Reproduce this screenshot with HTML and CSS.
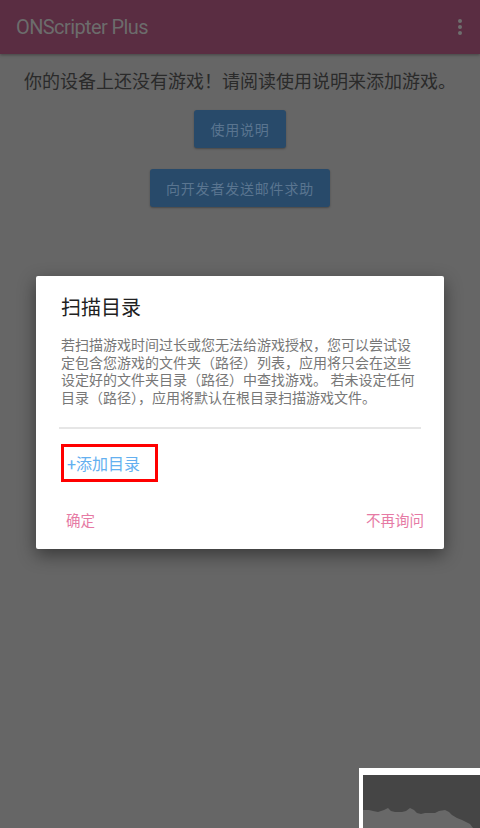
FILE: index.html
```html
<!DOCTYPE html>
<html lang="zh-CN">
<head>
<meta charset="utf-8">
<title>ONScripter Plus</title>
<link rel="stylesheet" href="styles.css">
</head>
<body>
<header class="appbar">
  <span class="appbar-title">ONScripter Plus</span>
  <span class="kebab"><i></i><i></i><i></i></span>
</header>
<main class="content">
  <p class="empty-msg">你的设备上还没有游戏！请阅读使用说明来添加游戏。</p>
  <button class="btn">使用说明</button>
  <button class="btn">向开发者发送邮件求助</button>
</main>

<div class="overlay">
  <div class="dialog">
    <h2 class="dialog-title">扫描目录</h2>
    <p class="dialog-body">若扫描游戏时间过长或您无法给游戏授权，您可以尝试设定包含您游戏的文件夹（路径）列表，应用将只会在这些设定好的文件夹目录（路径）中查找游戏。 若未设定任何目录（路径），应用将默认在根目录扫描游戏文件。</p>
    <div class="divider"></div>
    <div class="add-row"><span class="add-dir">+添加目录</span></div>
    <div class="actions">
      <span class="action">确定</span>
      <span class="action">不再询问</span>
    </div>
  </div>
</div>

<svg class="watermark" width="121" height="60" viewBox="0 0 121 60">
  <rect x="0" y="0" width="121" height="60" fill="#ffffff"/>
  <rect x="4" y="7" width="117" height="53" fill="#686868"/>
  <path d="M4 7 H121 V60 H114 L111 56 L107 54 L103 52 L98 50 L93 47 L90 44 L86 42 L80 43 L76 45 L66 45 L62 46 L58 45 L55 42 L51 40 L47 43 L43 44 L36 44 L32 43 L29 40 L25 42 L19 44 L14 43 L10 42 L4 42 Z" fill="#454545"/>
</svg>
</body>
</html>
```

FILE: styles.css
```css
* { box-sizing: border-box; }
html, body { margin: 0; padding: 0; }
body {
  width: 480px;
  height: 828px;
  background: #666666;
  font-family: Roboto, "Noto Sans CJK SC", sans-serif;
  overflow: hidden;
  position: relative;
}
.appbar {
  height: 54px;
  background: #5a2d42;
  display: flex;
  align-items: center;
  justify-content: space-between;
  padding: 0 18px 0 16px;
  box-shadow: 0 1px 3px rgba(0,0,0,0.35);
}
.appbar-title {
  color: #6c6c6c;
  font-size: 20px;
  letter-spacing: -0.6px;
}
.kebab {
  display: flex;
  flex-direction: column;
  gap: 2px;
}
.kebab i {
  display: block;
  width: 4px;
  height: 4px;
  border-radius: 50%;
  background: #6e6e6e;
}
.content {
  display: flex;
  flex-direction: column;
  align-items: center;
}
.empty-msg {
  margin: 17px 0 0;
  font-size: 18px;
  line-height: 22px;
  color: #2a2a2a;
}
.btn {
  margin-top: 17px;
  height: 38px;
  padding: 0 16px;
  border: 0;
  border-radius: 3px;
  background: #284a6a;
  color: #5a7590;
  font-family: Roboto, "Noto Sans CJK SC", sans-serif;
  font-size: 14px;
  letter-spacing: 0.8px;
  box-shadow: 0 1px 2px rgba(0,0,0,0.3);
}
.btn + .btn { margin-top: 21px; }
.overlay {
  position: absolute;
  inset: 0;
  display: flex;
  align-items: center;
  justify-content: center;
  padding-bottom: 3px;
}
.dialog {
  width: 408px;
  background: #ffffff;
  border-radius: 2px;
  box-shadow: 0 6px 18px rgba(0,0,0,0.45);
  padding: 20px 24px 0 25px;
  display: flex;
  flex-direction: column;
}
.dialog-title {
  margin: 0;
  font-weight: 400;
  font-size: 20px;
  line-height: 24px;
  color: #212121;
}
.dialog-body {
  margin: 17px 0 0;
  font-size: 14px;
  line-height: 17.5px;
  color: #777777;
}
.divider {
  margin: 20px -1px 0 -2px;
  height: 2px;
  background: #e6e6e6;
}
.add-row {
  margin-top: 15px;
  display: flex;
}
.add-dir {
  border: 3px solid #ff0000;
  height: 38px;
  width: 97px;
  padding-left: 3px;
  display: flex;
  align-items: center;
  font-size: 16px;
  color: #64b0f0;
}
.actions {
  display: flex;
  justify-content: space-between;
  align-items: center;
  padding: 30px 0 17px 5px;
  margin-right: -4px;
  line-height: 20px;
}
.action {
  font-size: 14.5px;
  color: #e67aa4;
}
.watermark {
  position: absolute;
  left: 359px;
  top: 768px;
  display: block;
}
```
